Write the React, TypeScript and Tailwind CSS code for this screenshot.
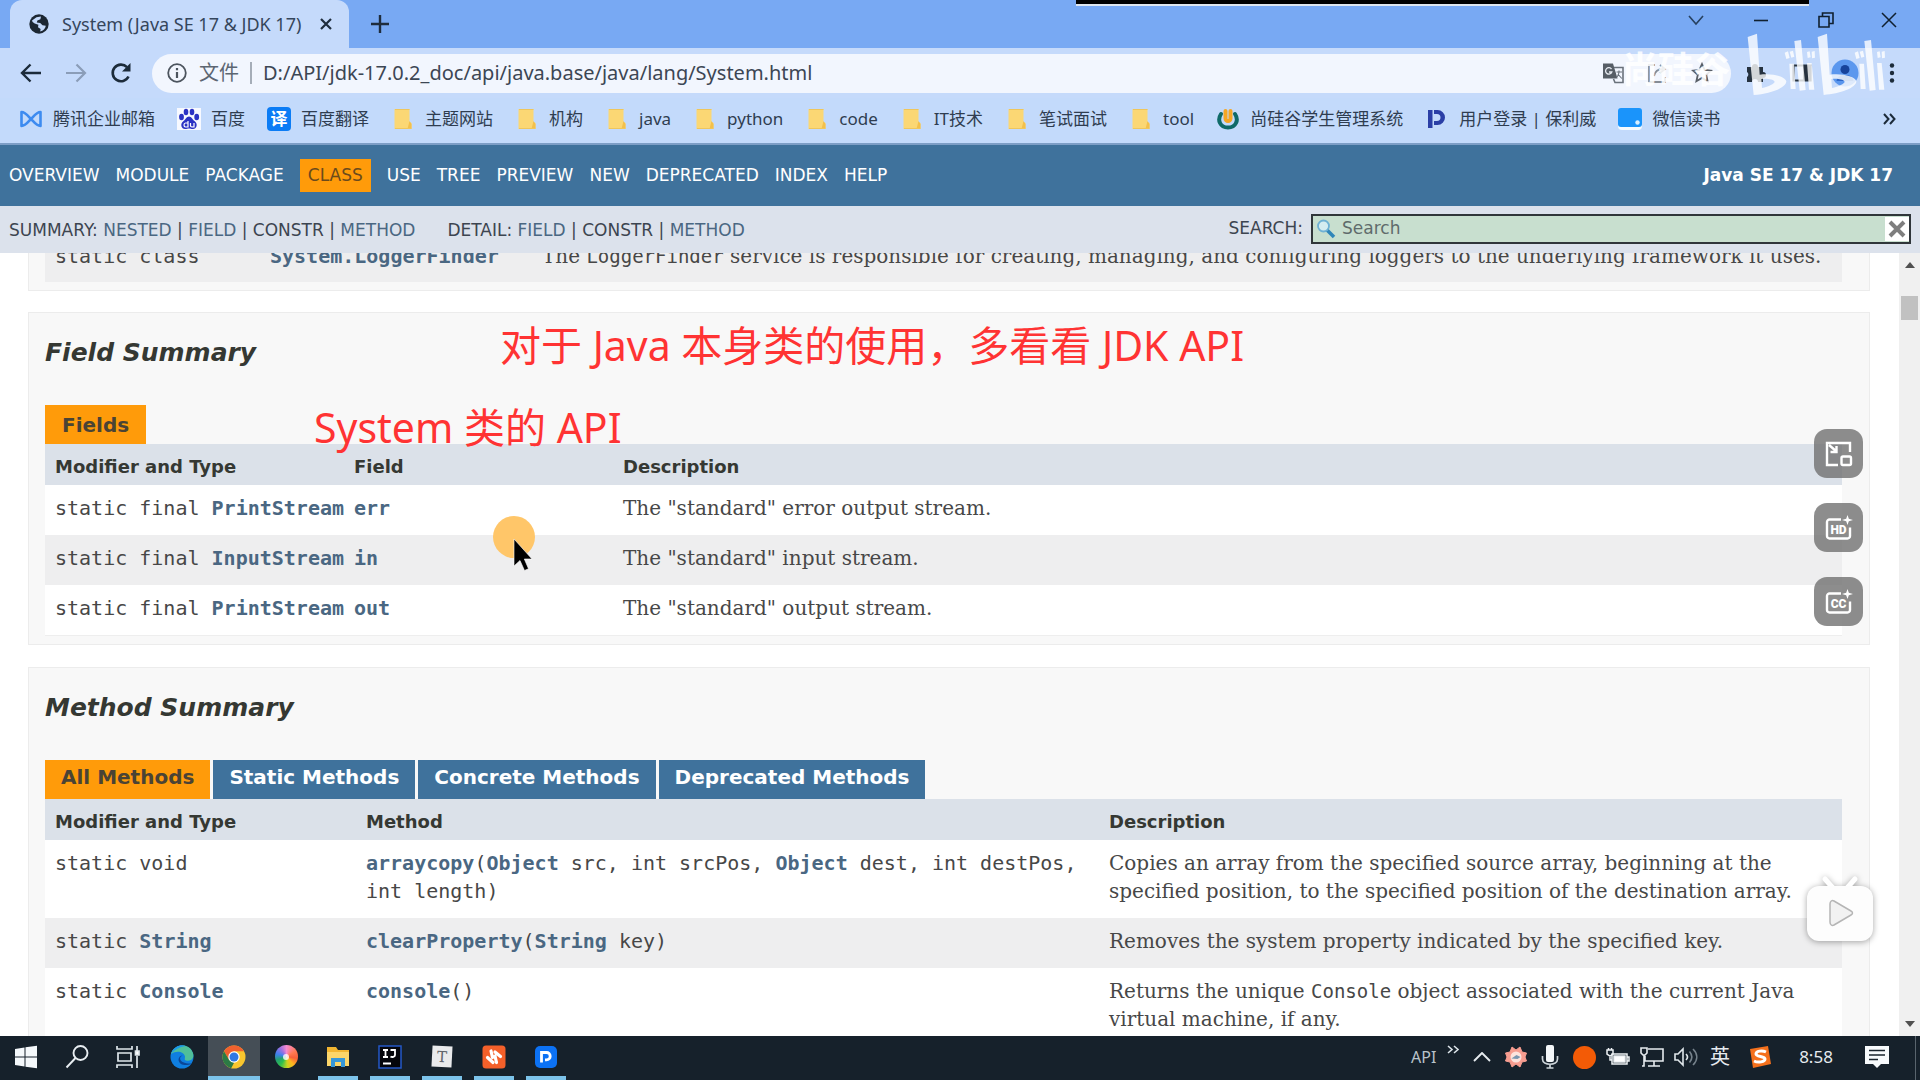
import React from "react";

const UI = "font-['Noto_Sans','Noto_Sans_CJK_SC',sans-serif]";
const MONO = "font-['DejaVu_Sans_Mono',monospace]";
const SERIF = "font-['DejaVu_Serif',serif]";

function Link({ children, bold = true }: { children: React.ReactNode; bold?: boolean }) {
  return (
    <a href="#" className={bold ? "font-bold text-[#4a6782]" : "text-[#4a6782]"}>
      {children}
    </a>
  );
}

/* ---------- browser chrome ---------- */

function Globe() {
  return (
    <svg viewBox="0 0 20 20" className="size-5 shrink-0" aria-hidden="true">
      <circle cx="10" cy="10" r="9.7" fill="#1c2733" />
      <path d="M3 6.5 7.5 3.2 12 2.5l-.6 2.7-3 1.3-.6 2.1 3.4.3 2.3 2.3 3.3.6c-.4 3-2.6 5.2-5.6 5.8l.4-2.7-2.6-1.7.4-2.4-3.7-1.2L3.6 8z" fill="#c5dafb" />
    </svg>
  );
}

function TabStrip() {
  return (
    <div className="flex h-12 items-stretch bg-[#78a9f3] pl-[10px]">
      <div className="flex w-[339px] items-center rounded-t-[12px] bg-[#c5dafb] pr-[13px] pl-[19px] text-[18px] text-[#35465c]">
        <Globe />
        <span className="ml-[13px] flex-1 whitespace-nowrap">System (Java SE 17 &amp; JDK 17)</span>
        <button aria-label="Close tab" className="grid size-5 place-items-center">
          <svg viewBox="0 0 12 12" className="size-3" stroke="#1f2d3d" strokeWidth="2.2"><path d="M1 1l10 10M11 1L1 11" /></svg>
        </button>
      </div>
      <button aria-label="New tab" className="ml-[19px] grid w-6 place-items-center">
        <svg viewBox="0 0 18 18" className="size-[18px]" stroke="#1f2d3d" strokeWidth="2.4"><path d="M9 0v18M0 9h18" /></svg>
      </button>
      <div className="ml-auto flex h-10 items-center">
        <button aria-label="Search tabs" className="grid w-[65px] place-items-center">
          <svg viewBox="0 0 16 16" className="size-4" fill="none" stroke="#27415f" strokeWidth="1.6"><path d="M1 4l7 8 7-8" /></svg>
        </button>
        <button aria-label="Minimize" className="grid w-[65px] place-items-center">
          <svg viewBox="0 0 16 16" className="size-4" stroke="#10202f" strokeWidth="1.6"><path d="M1 8.5h14" /></svg>
        </button>
        <button aria-label="Restore" className="grid w-[65px] place-items-center">
          <svg viewBox="0 0 16 16" className="size-4" fill="none" stroke="#10202f" strokeWidth="1.6"><path d="M1 4.5h10v10.500h-10zM4.500 4.500v-3.500h10.500v10.500h-4" /></svg>
        </button>
        <button aria-label="Close" className="grid w-[62px] place-items-center">
          <svg viewBox="0 0 16 16" className="size-4" stroke="#10202f" strokeWidth="1.5"><path d="M1 1l14 14M15 1L1 15" /></svg>
        </button>
      </div>
    </div>
  );
}

function Toolbar() {
  return (
    <div className="flex h-[50px] items-center bg-[#c5dafb] pr-[16px] pl-[20px]">
      <button aria-label="Back" className="w-[45px]">
        <svg viewBox="0 0 22 20" className="h-5 w-[22px]" fill="none" stroke="#1c2b3a" strokeWidth="2.4"><path d="M21 10H2M10.500 1.500L2 10l8.500 8.500" /></svg>
      </button>
      <button aria-label="Forward" className="w-[45px]">
        <svg viewBox="0 0 22 20" className="h-5 w-[22px]" fill="none" stroke="#8b9db8" strokeWidth="2.2"><path d="M1 10h19M11.500 1.500L20 10l-8.500 8.500" /></svg>
      </button>
      <button aria-label="Reload" className="w-[42px]">
        <svg viewBox="0 0 22 22" className="size-[22px]" fill="none" stroke="#1c2b3a" strokeWidth="2.600"><path d="M18.500 14.500A8.300 8.300 0 1 1 17 5.200" /><path d="M20.500 1v8.500H12z" fill="#1c2b3a" stroke="none" /></svg>
      </button>
      <div className="flex h-[39px] flex-1 items-center rounded-full bg-[#f2f6fe] pr-[18px] pl-[15px] text-[20px] text-[#3c4654]">
        <svg viewBox="0 0 20 20" className="size-5 shrink-0" fill="none" stroke="#4c545e" strokeWidth="1.800"><circle cx="10" cy="10" r="8.800" /><path d="M10 9v6M10 5v2.200" strokeWidth="2.200" /></svg>
        <span className="ml-3 text-[20px] text-[#5c6672]">文件</span>
        <span className="mx-[11px] h-[22px] w-[2px] bg-[#a5adb8]" />
        <input aria-label="Address" defaultValue="D:/API/jdk-17.0.2_doc/api/java.base/java/lang/System.html" className="min-w-0 flex-1 bg-transparent outline-none" />
        <button aria-label="Translate" className="w-[45px]">
          <svg viewBox="0 0 22 22" className="size-[22px]"><path d="M1 1.500h10l4.500 15H1z" fill="#575e66" /><path d="M12 5.500h9v15h-8l-1.500-3.500" fill="none" stroke="#6a727b" strokeWidth="1.600" /><path d="M9.500 7.200A3.200 3.200 0 1 0 9.800 10H7" fill="none" stroke="#e8ecf2" strokeWidth="1.300" /><path d="M14.500 10h5.500M17 8.500V10c0 3-1.500 4.500-2.500 5.500M15.800 12l4 4.500" fill="none" stroke="#6a727b" strokeWidth="1.100" /></svg>
        </button>
        <button aria-label="Share" className="w-[44px]">
          <svg viewBox="0 0 22 22" className="size-[22px]" fill="none" stroke="#858c95" strokeWidth="1.800"><path d="M8 3H2v17h16v-5M7 14c1-5 5-7 9-7M13 3l5 4-5 4" /></svg>
        </button>
        <button aria-label="Bookmark" className="w-[22px]">
          <svg viewBox="0 0 22 22" className="size-[22px]" fill="none" stroke="#5a6068" strokeWidth="1.800"><path d="M11 2l2.700 6 6.300.6-4.800 4.200 1.400 6.400L11 15.900l-5.600 3.300 1.400-6.400L2 8.600 8.300 8z" /></svg>
        </button>
      </div>
      <div className="flex items-center pl-[14px]">
        <button aria-label="Extensions" className="w-[46px]">
          <svg viewBox="0 0 22 22" className="size-[22px]" fill="#26323f"><path d="M2 5h5a3 3 0 0 1 6 0h5v5a3 3 0 0 1 0 6v4h-5a3 3 0 0 0-6 0H2v-5a3 3 0 0 0 0-5z" /></svg>
        </button>
        <button aria-label="Side panel" className="w-[40px]">
          <svg viewBox="0 0 22 22" className="size-[22px]"><path d="M2.500 3.500h17v15h-17z" fill="none" stroke="#26323f" strokeWidth="2.200" /><path d="M12 3h8v16h-8z" fill="#26323f" /></svg>
        </button>
        <button aria-label="Profile" className="w-[49px]">
          <svg viewBox="0 0 28 28" className="size-7"><circle cx="14" cy="14" r="13.500" fill="#5b97ee" /><circle cx="14" cy="10.500" r="4.500" fill="#17439b" /><path d="M5.500 22c1-5 4.500-6 8.500-6s7.500 1 8.500 6z" fill="#2e68c9" /></svg>
        </button>
        <button aria-label="Menu" className="grid w-[24px] place-items-center">
          <svg viewBox="0 0 6 20" className="h-5 w-[6px]" fill="#1c2b3a"><circle cx="3" cy="2.500" r="2.200" /><circle cx="3" cy="10" r="2.200" /><circle cx="3" cy="17.500" r="2.200" /></svg>
        </button>
      </div>
    </div>
  );
}

function FolderIcon() {
  return (
    <svg viewBox="0 0 24 24" className="size-6"><path d="M3.500 2h15v13l2 1v6h-17z" fill="#fbd774" /><path d="M18.500 14l2 3v5h-4z" fill="#f3c04b" /><path d="M4 2.500h14.500M4 21.500h16" stroke="#efc65b" /></svg>
  );
}

const bookmarks: { label: string; icon: React.ReactNode }[] = [
  { label: "腾讯企业邮箱", icon: <svg viewBox="0 0 24 24" className="size-6" fill="none" stroke="#3d8bf0" strokeWidth="2.600" strokeLinejoin="round"><path d="M2.500 5c4 0 7 4.500 9.500 7s5.500 7 9.500 7V5c-4 0-7 4.500-9.500 7s-5.500 7-9.500 7z" /></svg> },
  { label: "百度", icon: <svg viewBox="0 0 24 24" className="size-6"><path d="M0 1h24v22H0z" fill="#f7f9ff" /><g fill="#2a32c4"><ellipse cx="4.500" cy="10" rx="2.400" ry="3.200" /><ellipse cx="9" cy="5" rx="2.300" ry="3.200" /><ellipse cx="15" cy="5" rx="2.300" ry="3.200" /><ellipse cx="19.700" cy="10" rx="2.400" ry="3.200" /><path d="M12 9.500c2.500 0 3.500 3 5.500 4.500 4 3 2 8-1.500 8-2 0-2.500-.5-4-.5s-2 .5-4 .5c-3.500 0-5.500-5-1.500-8 2-1.500 3-4.500 5.500-4.500z" /></g><path d="M11 14v6H8.500c-2 0-2-4 0-4H11M13.500 16v2.500c0 1.500.5 1.500 3.500 1.500v-4" fill="none" stroke="#fff" strokeWidth="1.200" /></svg> },
  { label: "百度翻译", icon: <span className="grid size-6 place-items-center rounded-[4px] bg-[#0b7cf5] text-[17px] leading-6 font-bold text-white">译</span> },
  { label: "主题网站", icon: <FolderIcon /> },
  { label: "机构", icon: <FolderIcon /> },
  { label: "java", icon: <FolderIcon /> },
  { label: "python", icon: <FolderIcon /> },
  { label: "code", icon: <FolderIcon /> },
  { label: "IT技术", icon: <FolderIcon /> },
  { label: "笔试面试", icon: <FolderIcon /> },
  { label: "tool", icon: <FolderIcon /> },
  { label: "尚硅谷学生管理系统", icon: <svg viewBox="0 0 24 24" className="size-6" fill="none" strokeLinecap="round"><path d="M5 7C1 13 4 20.500 12 20.500S23 13 19 7" stroke="#0f6a68" strokeWidth="4" /><path d="M9.500 4v7.500a2.500 2.500 0 0 0 5 0V4" stroke="#f5a623" strokeWidth="4" /></svg> },
  { label: "用户登录 | 保利威", icon: <svg viewBox="0 0 24 24" className="size-6" fill="#2b3fa6"><path d="M3 3h4.500v18H3zM9 3h3.500a7.500 7.500 0 0 1 0 15H9v-4h3a3.300 3.300 0 0 0 0-7H9z" /></svg> },
  { label: "微信读书", icon: <svg viewBox="0 0 24 24" className="size-6"><rect x="0" y="2" width="24" height="21" rx="4" fill="#f4faff" /><rect x="0" y="1" width="24" height="19" rx="3" fill="#1a94fb" /><circle cx="19.500" cy="15.500" r="2.200" fill="#d8efff" /></svg> },
];

function BookmarksBar() {
  return (
    <nav aria-label="Bookmarks" className="flex h-[47px] items-center gap-[22px] border-b-2 border-[#7d9ec6] bg-[#c3dafb] pr-6 pb-[3px] pl-[19px] text-[17px] text-[#2f3d50]">
      {bookmarks.map((b) => (
        <a key={b.label} href="#" className="flex shrink-0 items-center gap-[10px] whitespace-nowrap">
          {b.icon}
          {b.label}
        </a>
      ))}
      <button aria-label="More bookmarks" className="ml-auto">
        <svg viewBox="0 0 13 12" className="h-3 w-[13px]" fill="none" stroke="#1c2b3a" strokeWidth="2"><path d="M1 1l4.500 5L1 11M7 1l4.500 5L7 11" /></svg>
      </button>
    </nav>
  );
}

/* ---------- javadoc page ---------- */

const navBefore = ["OVERVIEW", "MODULE", "PACKAGE"];
const navAfter = ["USE", "TREE", "PREVIEW", "NEW", "DEPRECATED", "INDEX", "HELP"];

function TopNav() {
  return (
    <nav aria-label="Documentation" className="flex h-[61px] items-center bg-[#3f729c] px-[9px] text-[17px] text-white">
      <div className="flex items-center gap-4">
        {navBefore.map((n) => <a key={n} href="#">{n}</a>)}
        <span className="bg-[#ff9b0a] px-2 py-1 text-[#6b4a1c]">CLASS</span>
        {navAfter.map((n) => <a key={n} href="#">{n}</a>)}
      </div>
      <strong className="ml-auto pr-[18px]">Java SE 17 &amp; JDK 17</strong>
    </nav>
  );
}

function SubNav() {
  return (
    <div className="flex h-[47px] items-center bg-[#dce2ec] pr-[9px] pl-[9px] text-[17px] text-[#3d4550]">
      <div className="pt-[2px] whitespace-nowrap">
        SUMMARY: <Link bold={false}>NESTED</Link> | <Link bold={false}>FIELD</Link> | CONSTR | <Link bold={false}>METHOD</Link>
      </div>
      <div className="ml-8 pt-[2px] whitespace-nowrap">
        DETAIL: <Link bold={false}>FIELD</Link> | CONSTR | <Link bold={false}>METHOD</Link>
      </div>
      <form className="ml-auto flex items-center gap-2 pb-[2px]">
        <label htmlFor="search-input">SEARCH:</label>
        <div className="flex h-[30px] w-[600px] items-center border-2 border-[#30363a] bg-[#c8dfcf] pl-[3px]">
          <svg viewBox="0 0 20 20" className="size-5 shrink-0" fill="none"><path d="M11 11l7 7" stroke="#2f86b9" strokeWidth="3.500" /><circle cx="7.500" cy="7" r="5.500" stroke="#6fb1d4" strokeWidth="1.800" fill="#d5ecf0" /></svg>
          <input id="search-input" placeholder="Search" className="ml-[6px] min-w-0 flex-1 bg-transparent text-[17px] outline-none placeholder:text-[#5f6b6b]" />
          <button type="reset" aria-label="Reset" className="grid h-[24px] w-[24px] place-items-center bg-white">
            <svg viewBox="0 0 18 18" className="size-[18px]" stroke="#7e7e7e" strokeWidth="4"><path d="M2 2l14 14M16 2L2 16" /></svg>
          </button>
        </div>
      </form>
    </div>
  );
}

type Row = React.ReactNode[];

function DataTable({ heads, widths, rows }: { heads: string[]; widths: string[]; rows: Row[] }) {
  return (
    <table className="w-full table-fixed border-b border-[#eeeeee] text-left text-[20px] leading-7 text-[#474747]">
      <thead>
        <tr className="h-[41px] bg-[#dbe1e9] text-[18px] text-[#353833]">
          {heads.map((h, i) => <th key={h} className={`${widths[i]} px-[10px] pt-[5px] pb-0 font-bold`}>{h}</th>)}
        </tr>
      </thead>
      <tbody>
        {rows.map((r, i) => (
          <tr key={i} className="bg-white align-top even:bg-[#eeeeef]">
            <td className={`px-[10px] pt-[9px] pb-[13px] whitespace-nowrap ${MONO}`}>{r[0]}</td>
            <td className={`px-[10px] pt-[9px] pb-[13px] ${MONO}`}>{r[1]}</td>
            <td className={`px-[10px] pt-[9px] pb-[13px] ${SERIF}`}>{r[2]}</td>
          </tr>
        ))}
      </tbody>
    </table>
  );
}

const fieldRows: Row[] = [
  [<>static final <Link>PrintStream</Link></>, <Link>err</Link>, 'The "standard" error output stream.'],
  [<>static final <Link>InputStream</Link></>, <Link>in</Link>, 'The "standard" input stream.'],
  [<>static final <Link>PrintStream</Link></>, <Link>out</Link>, 'The "standard" output stream.'],
];

const methodRows: Row[] = [
  [
    "static void",
    <><Link>arraycopy</Link>(<Link>Object</Link> src, int srcPos, <Link>Object</Link> dest, int destPos, int length)</>,
    "Copies an array from the specified source array, beginning at the specified position, to the specified position of the destination array.",
  ],
  [<>static <Link>String</Link></>, <><Link>clearProperty</Link>(<Link>String</Link> key)</>, "Removes the system property indicated by the specified key."],
  [<>static <Link>Console</Link></>, <><Link>console</Link>()</>, <>Returns the unique <code className={`text-[19px] ${MONO}`}>Console</code> object associated with the current Java virtual machine, if any.</>],
];

const methodTabs = ["Static Methods", "Concrete Methods", "Deprecated Methods"];
const section = "border border-[#ececec] bg-[#f8f8f8] pr-[27px] pl-4";

function DocPage() {
  return (
    <div className="flex min-h-0 flex-1">
      <main className="min-w-0 flex-1 overflow-hidden bg-white pr-[29px] pl-7">
        <section className={`${section} -mt-[25px] pb-2`}>
          <div className="flex h-[53px] items-center bg-[#eeeeef] pl-[10px] text-[20px] whitespace-nowrap text-[#474747]">
            <span className={`w-[215px] ${MONO}`}>static class</span>
            <span className={`w-[272px] ${MONO}`}><Link>System.LoggerFinder</Link></span>
            <span className={SERIF}>
              The <code className={`text-[19px] ${MONO}`}>LoggerFinder</code> service is responsible for creating, managing, and configuring loggers to the underlying framework it uses.
            </span>
          </div>
        </section>

        <section className={`${section} mt-[21px] pb-2`}>
          <h2 className="pt-6 text-[25px] leading-8 font-bold text-[#353833] italic">Field Summary</h2>
          <div className="mt-9 inline-flex h-[39px] items-center bg-[#ff9b0a] px-[17px] text-[20px] font-bold text-[#4a4335]">Fields</div>
          <DataTable heads={["Modifier and Type", "Field", "Description"]} widths={["w-[299px]", "w-[269px]", "w-auto"]} rows={fieldRows} />
        </section>

        <section className={`${section} mt-[22px]`}>
          <h2 className="pt-6 text-[25px] leading-8 font-bold text-[#353833] italic">Method Summary</h2>
          <div role="tablist" className="mt-9 flex gap-[3px] text-[20px] font-bold text-white">
            <button role="tab" aria-selected="true" className="h-[39px] bg-[#ff9b0a] px-4 pb-[5px] text-[#4a4335]">All Methods</button>
            {methodTabs.map((t) => <button key={t} role="tab" aria-selected="false" className="h-[39px] bg-[#3f729c] px-4 pb-[5px]">{t}</button>)}
          </div>
          <DataTable heads={["Modifier and Type", "Method", "Description"]} widths={["w-[311px]", "w-[743px]", "w-auto"]} rows={methodRows} />
        </section>
      </main>
      <div className="flex w-[21px] shrink-0 flex-col items-center justify-between bg-[#f0f0f0] py-[9px]">
        <div className="flex w-full flex-col items-center gap-[28px]">
          <svg viewBox="0 0 10 6" className="h-[6px] w-[10px]" fill="#505050"><path d="M5 0l5 6H0z" /></svg>
          <div className="h-6 w-[17px] bg-[#c1c1c1]" />
        </div>
        <svg viewBox="0 0 10 6" className="h-[6px] w-[10px]" fill="#505050"><path d="M5 6L0 0h10z" /></svg>
      </div>
    </div>
  );
}

/* ---------- Windows taskbar ---------- */

const system: { name: string; icon: React.ReactNode }[] = [
  { name: "Start", icon: <svg viewBox="0 0 24 24" className="size-6" fill="#f4f8fb"><path d="M1 4l9.500-1.500V11.500H1zM11.500 2.300L23 .8v10.700H11.500zM1 12.500h9.500v9L1 20zM11.500 12.500H23v10.700l-11.500-1.500z" /></svg> },
  { name: "Search", icon: <svg viewBox="0 0 24 24" className="size-6" fill="none" stroke="#e8eef2" strokeWidth="1.900"><circle cx="15.500" cy="8" r="7" /><path d="M10.500 13L1.500 22.500" /></svg> },
  { name: "Task view", icon: <svg viewBox="0 0 24 24" className="size-6" fill="none" stroke="#dfe7ec" strokeWidth="1.700"><path d="M1 1v3h15V1M2 8h13v8H2zM1 23v-3h15v3M21 1v5M21 11v12" /><path d="M19.500 6h3.500v4h-3.500z" fill="#fff" /></svg> },
];

const apps: { name: string; state: "idle" | "open" | "active"; icon: React.ReactNode }[] = [
  { name: "Edge", state: "idle", icon: <svg viewBox="0 0 24 24" className="size-6"><circle cx="12" cy="12" r="11.500" fill="#0f7fe0" /><path d="M1 9C4-1 19-3 23 8c1.500 6-2 8.500-7 7.500-2-.5-1-2-1-4C14 7 7 5 1 9z" fill="#4fbf9a" /><path d="M1 9C4 0 12-1 16 1 9 2 4 5 1 9z" fill="#1c9be8" /><path d="M14 10.500c-6 0-6 8.500 7.500 8-4 2.500-12 2.500-13-3.500 0-3 2-5 5.500-4.500z" fill="#0b4797" /></svg> },
  { name: "Chrome", state: "active", icon: <svg viewBox="0 0 24 24" className="size-6"><circle cx="12" cy="12" r="11.500" fill="#f9c62e" /><path d="M2 6.200A11.500 11.500 0 0 1 22 6.200H12L7 14.500z" fill="#f0612f" /><path d="M2 6.200l5 8.600 5.200 2.700-3 5.700A11.500 11.500 0 0 1 2 6.200z" fill="#2c7a45" /><circle cx="12" cy="12" r="5.700" fill="#fff" /><circle cx="12" cy="12" r="4.500" fill="#2f78e4" /></svg> },
  { name: "Photos", state: "idle", icon: <span className="grid size-[23px] place-items-center rounded-full bg-[conic-gradient(#f58ad0,#ff7a52_60deg,#f7603a_100deg,#ffb51f_140deg,#c8d420_175deg,#2fc04c_215deg,#23a070_250deg,#3f7ff0_285deg,#a070e0_325deg,#f58ad0)]"><span className="size-[6px] rounded-full bg-white/80" /></span> },
  { name: "File Explorer", state: "open", icon: <svg viewBox="0 0 24 24" className="size-6"><path d="M1 2h9l2 3h11v16H1z" fill="#f2b632" /><path d="M1 7h22v14H1z" fill="#fbd56a" /><path d="M5 22v-9h14v9h-4v-5H9v5z" fill="#3797d8" /></svg> },
  { name: "IntelliJ IDEA", state: "open", icon: <svg viewBox="0 0 24 24" className="size-6"><path d="M1 1h22v22H1z" fill="#05060b" stroke="#2458c8" strokeWidth="1.500" /><path d="M5 5h5M7.500 5v7M5 12h5M12.500 5H17v5c0 2-3 2.500-4.500 1.500M5 18.500h8" fill="none" stroke="#fff" strokeWidth="1.800" /></svg> },
  { name: "Typora", state: "open", icon: <span className="grid h-[21px] w-5 rotate-3 place-items-center bg-[#e9eaec] font-['DejaVu_Serif',serif] text-[15px] text-[#60646a]">T</span> },
  { name: "Xmind", state: "open", icon: <svg viewBox="0 0 24 24" className="size-6"><rect x=".5" y=".5" width="23" height="23" rx="3.500" fill="#f4602a" /><path d="M9 6l1.500 6.500M5.500 12.500l5.500 5M14.500 17.500L13 11M18.500 11.500L13 7" fill="none" stroke="#fff" strokeWidth="3.200" strokeLinecap="round" /></svg> },
  { name: "Polyv", state: "open", icon: <svg viewBox="0 0 24 24" className="size-6"><rect x="1" y="1" width="22" height="22" rx="5" fill="#0c72f4" /><path d="M7.500 17.500V7.500h5a3.700 3.700 0 0 1 0 7.400H11" fill="none" stroke="#fff" strokeWidth="2.800" /></svg> },
];

const trayCell = "grid w-[34px] place-items-center";

function Taskbar() {
  return (
    <footer className={`flex h-11 items-stretch bg-[#16212b] text-[#e6ebef] ${UI}`}>
      <div className="mr-[3px] flex">
        {system.map((s) => (
          <button key={s.name} aria-label={s.name} className="grid w-[51px] place-items-center pb-[3px]">{s.icon}</button>
        ))}
      </div>
      {apps.map((a) => (
        <button key={a.name} aria-label={a.name} className={a.state === "active" ? "flex w-[52px] flex-col items-center bg-[#454e56]" : "flex w-[52px] flex-col items-center"}>
          <span className="grid flex-1 place-items-center pt-px">{a.icon}</span>
          <span className={a.state === "idle" ? "h-1 w-10" : a.state === "active" ? "h-1 w-full bg-[#7cc3ea]" : "h-1 w-10 bg-[#7cc3ea]"} />
        </button>
      ))}
      <div className="ml-auto flex items-center pb-[2px] text-[16px]">
        <span className="w-[30px] text-[#b9c3ca]">API</span>
        <span className="grid w-6 place-items-center pb-4">
          <svg viewBox="0 0 13 9" className="h-[9px] w-[13px]" fill="none" stroke="#dde5ea" strokeWidth="1.600"><path d="M1 1l4 3.500L1 8M7 1l4 3.500L7 8" /></svg>
        </span>
        <button aria-label="Show hidden icons" className={trayCell}><svg viewBox="0 0 18 10" className="h-[10px] w-[18px]" fill="none" stroke="#e6ebef" strokeWidth="1.900"><path d="M1 9l8-8 8 8" /></svg></button>
        <span className={trayCell}><svg viewBox="0 0 22 22" className="size-[22px]"><path d="M7 1l4 3 4-3 2 5 4.500 1-1.500 4 1.500 4-4.500 1-2 5-4-3-4 3-2-5-4.500-1L2 11 .5 7 5 6z" fill="#f79d90" stroke="#f79d90" strokeWidth="1" strokeLinejoin="round" /><circle cx="11" cy="11" r="5.500" fill="#fde3dd" /><path d="M6.500 12.500l5-3.500 4 2-3 2z" fill="#7a96b0" /></svg></span>
        <span className={trayCell}><svg viewBox="0 0 18 24" className="h-6 w-[18px]"><rect x="5" y="0" width="8" height="17" rx="2" fill="#f4f7f9" /><path d="M1.500 11v3c0 7 15 7 15 0v-3M9 19v4M5.500 23h7" fill="none" stroke="#cdd5da" strokeWidth="1.700" /></svg></span>
        <span className={trayCell}><span className="size-[23px] rounded-full bg-[#f35b06]" /></span>
        <span className={trayCell}><svg viewBox="0 0 24 20" className="h-5 w-6" fill="none" stroke="#eef2f5" strokeWidth="1.500"><path d="M6 7h15v10H6zM21 10h2v4h-2" /><path d="M8 9h11v6H8z" fill="#fff" /><path d="M1 3h6v4l-3 2-3-2zM2.500 1v2M5.500 1v2M4 9v4h2" /></svg></span>
        <span className={trayCell}><svg viewBox="0 0 24 22" className="h-[22px] w-6" fill="none" stroke="#e6ebef" strokeWidth="1.600"><path d="M8 3h15v12H5V10M14 15v5M8 20h12M1 2h6v5l-2 2H3L1 7zM4 9v11H2" /></svg></span>
        <span className={trayCell}><svg viewBox="0 0 24 20" className="h-5 w-6" fill="none" stroke="#dfe6ea" strokeWidth="1.600"><path d="M1 7h3l5-5v16l-5-5H1zM12 7c2 2 2 4 0 6" /><path d="M15.500 4.500c3 3.500 3 7.500 0 11M19 2c5 5 5 11 0 16" stroke="#77838c" /></svg></span>
        <span className="w-[34px] text-center text-[20px]">英</span>
        <span className="grid w-[46px] place-items-center"><svg viewBox="0 0 24 24" className="size-6"><path d="M2 4l18-3 3 18-18 4z" fill="#f4701c" /><path d="M18 7c-4-2-10-1-10 2s9 2 9 5-7 4-11 2" fill="none" stroke="#fff" strokeWidth="3" /></svg></span>
        <time className="w-[66px] text-center text-[17px]">8:58</time>
        <button aria-label="Notifications" className="grid w-[55px] place-items-center"><svg viewBox="0 0 24 24" className="size-6"><path d="M0 1h24v18h-8l-4 4-4-4H0z" fill="#f7fafc" /><path d="M4 5.500h16M4 10h16M4 14.500h9" stroke="#1a242d" strokeWidth="1.700" /></svg></button>
      </div>
      <span className="ml-[11px] w-[5px] border-l border-[#59646d]" />
    </footer>
  );
}

/* ---------- layers over the desktop ---------- */

const floatButton = "grid size-[49px] place-items-center rounded-[13px] bg-[#707070]/80 text-white";

function Spark({ label }: { label: string }) {
  return (
    <svg viewBox="0 0 28 26" className="h-[26px] w-7">
      <path d="M16 4.500H4.500a2.500 2.500 0 0 0-2.500 2.500v14a2.500 2.500 0 0 0 2.500 2.500h18a2.500 2.500 0 0 0 2.500-2.500V12.500" fill="none" stroke="#fff" strokeWidth="2.400" />
      <path d="M22.500 0l1.300 3.700 4.200 1.300-4.200 1.300L22.500 10l-1.300-3.700L17 5l4.200-1.300z" fill="#fff" />
      <text x="13.500" y="18.500" textAnchor="middle" fontSize="12" fontWeight="900" fontFamily="Roboto, sans-serif" fill="#fff">{label}</text>
    </svg>
  );
}

function BiliHalf() {
  return (
    <>
      <path fillRule="evenodd" d="M2 12L30 2l8 123c37-5 77 5 80 20 0 20-48 37-98 41zM43 138l2 27c20-5 38-13 38-19-5-8-23-10-40-8z" />
      <path d="M127 92h14l5 76h-15zM142 24l20-3 14 150-18 2zM180 90h14l8 80h-16zM113 59l10-4 5 20-10 3zM128 56l10-3 4 18-9 3zM180 57l8-2 3 18-9 2zM194 56l9-2 1 20-9 2z" />
    </>
  );
}

function Overlays() {
  return (
    <>
      <div className="absolute top-0 right-[111px] left-[1076px] h-[6px] border-b-2 border-[#dfe6ee] bg-black" />
      <div className={`absolute top-[46px] right-[190px] text-[36px] leading-[48px] font-bold text-white/85 ${UI}`}>尚硅谷</div>
      <svg viewBox="0 0 426 192" className="absolute top-[33px] right-[31px] h-16 w-[142px]" fill="#fff" fillOpacity=".8" role="img" aria-label="bilibili">
        <BiliHalf />
        <g transform="translate(210 0)"><BiliHalf /></g>
      </svg>

      <p className={`absolute top-[315px] left-[500px] text-[41px] leading-[60px] whitespace-nowrap text-[#ff3333] ${UI}`}>对于 Java 本身类的使用，多看看 JDK API</p>
      <p className={`absolute top-[397px] left-[314px] text-[41px] leading-[60px] whitespace-nowrap text-[#ff3333] ${UI}`}>System 类的 API</p>

      <div className="absolute top-[516px] left-[493px] size-[42px] rounded-full bg-[#ffc669]" />
      <svg viewBox="0 0 20 34" className="absolute top-[538px] left-[513px] h-[34px] w-5"><path d="M1 1v27l6-5.500 4.500 10 4-1.800L11.300 21H19z" fill="#000" stroke="#fff" strokeWidth=".6" /></svg>

      <div className="absolute top-[429px] right-[57px] flex flex-col gap-[25px]">
        <button aria-label="Picture in picture" className={floatButton}>
          <svg viewBox="0 0 28 26" className="h-[26px] w-7" fill="none" stroke="#fff" strokeWidth="2.400"><path d="M13 24H2V2h23v9M4 4l7 6M11.500 5v6H5.500" /><rect x="16.500" y="15.500" width="9.500" height="8.500" rx="1.500" /></svg>
        </button>
        <button aria-label="HD" className={floatButton}><Spark label="HD" /></button>
        <button aria-label="Captions" className={floatButton}><Spark label="CC" /></button>
      </div>

      <button aria-label="Play" className="absolute top-[875px] right-[46px] drop-shadow-[0_1px_3px_rgba(0,0,0,0.35)]">
        <svg viewBox="0 0 68 68" className="size-[68px]"><path d="M19 4l8 9M49 4l-8 9" stroke="#fff" strokeWidth="5" strokeLinecap="round" /><rect x="1" y="11" width="66" height="55" rx="12" fill="#fdfdfd" /><path d="M24 29c0-3 2-4 4-3l17 10c2 1 2 3 0 4L28 50c-2 1-4 0-4-3z" fill="#f2f2f2" stroke="#b5b5b5" strokeWidth="1.500" /></svg>
      </button>
    </>
  );
}

export default function App() {
  return (
    <div className="relative flex h-screen flex-col overflow-hidden font-['DejaVu_Sans',sans-serif]">
      <header className={UI}>
        <TabStrip />
        <Toolbar />
        <BookmarksBar />
      </header>
      <TopNav />
      <SubNav />
      <DocPage />
      <Taskbar />
      <Overlays />
    </div>
  );
}
